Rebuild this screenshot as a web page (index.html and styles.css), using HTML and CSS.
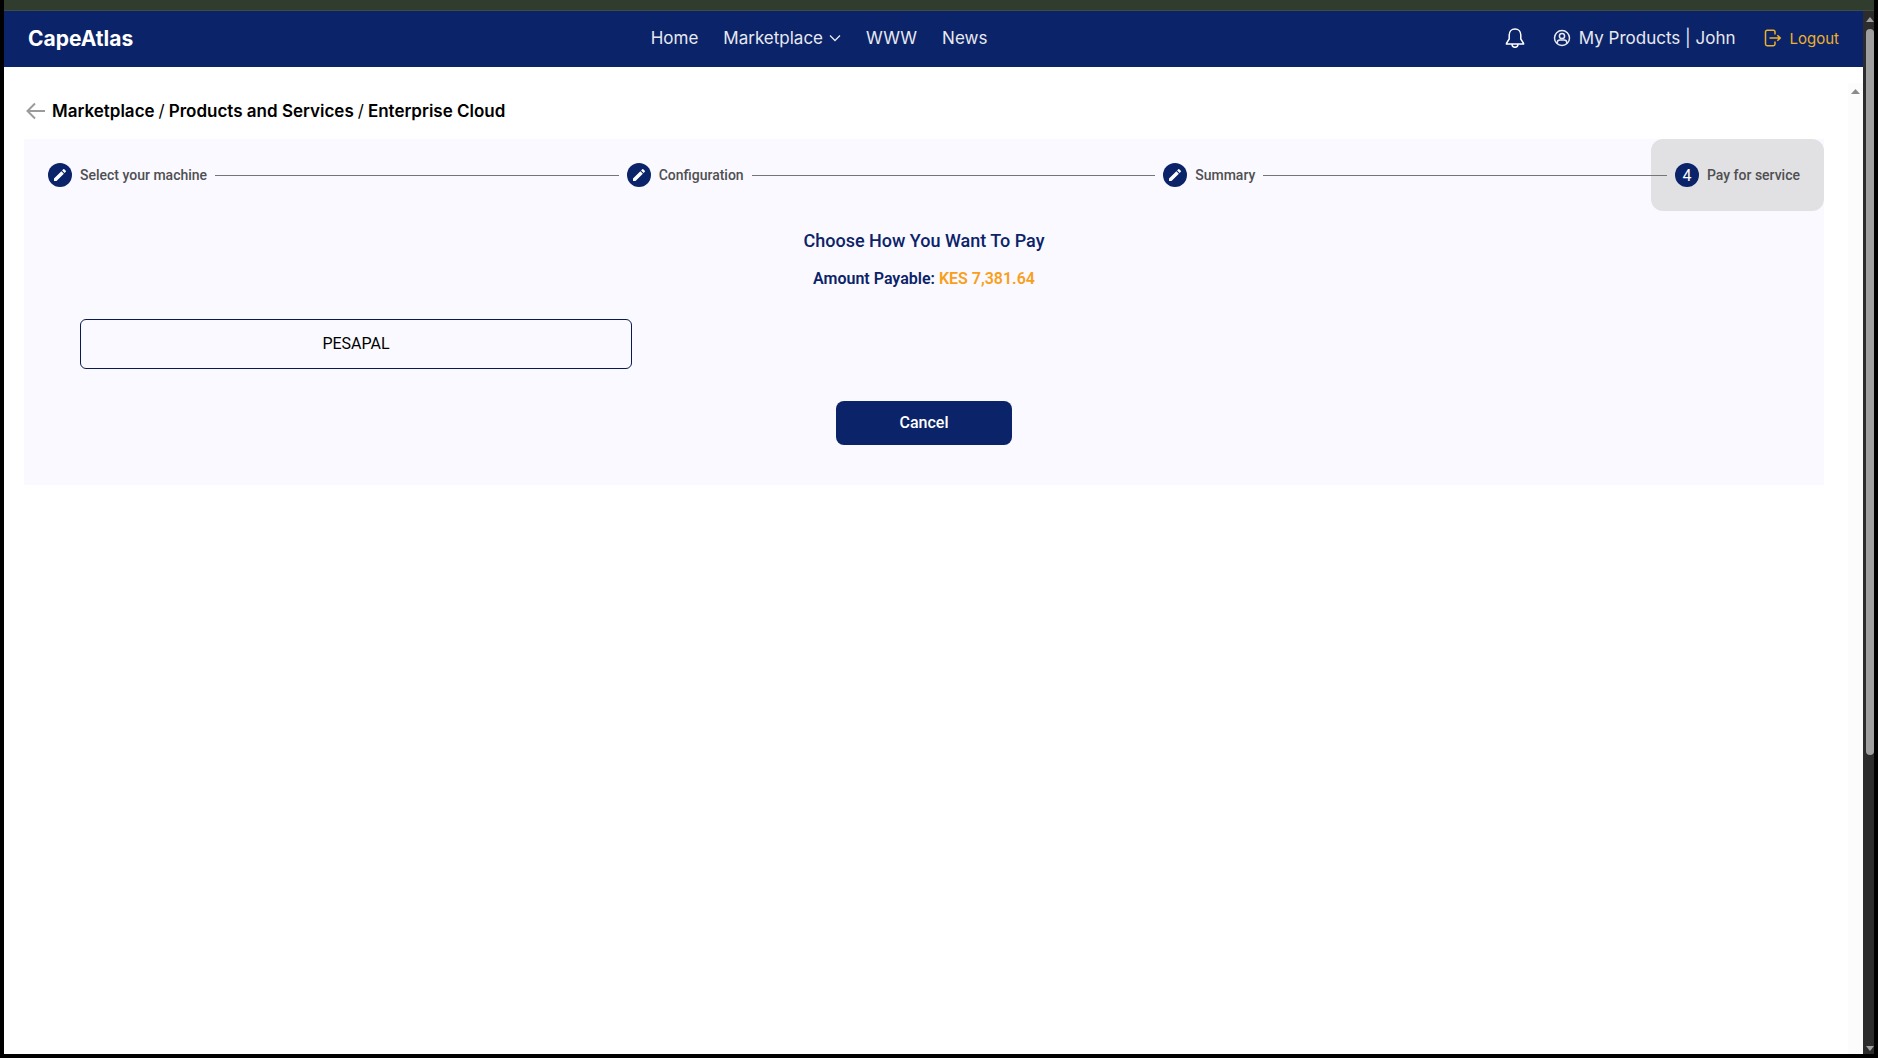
FILE: index.html
```html
<!DOCTYPE html>
<html lang="en">
<head>
  <meta charset="UTF-8">
  <meta name="viewport" content="width=device-width, initial-scale=1.0">
  <title>CapeAtlas - Pay for service</title>
  <link rel="stylesheet" href="styles.css">
</head>
<body>
  <div class="top-strip"></div>
  <div class="window">
    <div class="page">
      <header class="navbar">
        <a class="brand" href="#">CapeAtlas</a>
        <nav class="nav-links">
          <a href="#">Home</a>
          <a href="#">Marketplace
            <svg class="chevron" width="12" height="12" viewBox="0 0 12 12"><path d="M1 3.5l5 5 5-5"/></svg>
          </a>
          <a href="#">WWW</a>
          <a href="#">News</a>
        </nav>
        <div class="account">
          <button class="bell" type="button" aria-label="Notifications">
            <svg width="20" height="20" viewBox="0 0 20 20"><path d="M10 1C6.500 1 4.200 3.700 4.200 7v4L1.500 15.300V16h17v-.7L15.800 11V7C15.800 3.700 13.500 1 10 1zM7 16c0 2 1.300 3.300 3 3.300s3-1.300 3-3.300"/></svg>
          </button>
          <a class="profile" href="#">
            <svg width="18" height="18" viewBox="0 0 18 18"><circle cx="9" cy="9" r="7.500"/><circle cx="9" cy="7" r="2.600"/><path d="M4.200 14.500v-.8c0-1.700 1.100-2.700 2.700-2.700h4.200c1.600 0 2.700 1 2.700 2.700v.8"/></svg>
            My Products | John
          </a>
          <a class="logout" href="#">
            <svg width="18" height="18" viewBox="0 0 18 18"><path d="M11 5.500V3c0-1-.6-1.700-1.600-1.700H3.200c-1 0-1.700.7-1.700 1.700v12c0 1 .7 1.700 1.700 1.700h6.200c1 0 1.600-.7 1.600-1.700v-2.500M5.500 9H16M13.300 6.200L16.200 9l-2.900 2.800"/></svg>
            Logout
          </a>
        </div>
      </header>

      <div class="content">
        <main>
          <div class="breadcrumb">
            <a class="back" href="#" aria-label="Back">
              <svg width="20" height="18" viewBox="0 0 20 18"><path d="M19 9H2M9 1.500L1.500 9 9 16.500"/></svg>
            </a>
            <a href="#">Marketplace</a>
            <span>/</span>
            <a href="#">Products and Services</a>
            <span>/</span>
            <a href="#">Enterprise Cloud</a>
          </div>

          <section class="panel">
            <div class="stepper">
              <button class="step" type="button">
                <span class="step-icon"><svg width="16" height="16" viewBox="0 0 24 24"><path d="M3 17.250V21h3.750L17.810 9.940l-3.750-3.750L3 17.250zM20.710 7.040c.39-.39.39-1.020 0-1.410l-2.340-2.340c-.39-.39-1.020-.39-1.410 0l-1.830 1.830 3.750 3.750 1.830-1.830z"/></svg></span>
                Select your machine
              </button>
              <div class="step-line"></div>
              <button class="step" type="button">
                <span class="step-icon"><svg width="16" height="16" viewBox="0 0 24 24"><path d="M3 17.250V21h3.750L17.810 9.940l-3.750-3.750L3 17.250zM20.710 7.040c.39-.39.39-1.020 0-1.410l-2.340-2.340c-.39-.39-1.020-.39-1.410 0l-1.830 1.830 3.750 3.750 1.830-1.830z"/></svg></span>
                Configuration
              </button>
              <div class="step-line"></div>
              <button class="step" type="button">
                <span class="step-icon"><svg width="16" height="16" viewBox="0 0 24 24"><path d="M3 17.250V21h3.750L17.810 9.940l-3.750-3.750L3 17.250zM20.710 7.040c.39-.39.39-1.020 0-1.410l-2.340-2.340c-.39-.39-1.020-.39-1.410 0l-1.830 1.830 3.750 3.750 1.830-1.830z"/></svg></span>
                Summary
              </button>
              <div class="step-line"></div>
              <button class="step active" type="button" aria-current="step">
                <span class="step-icon">4</span>
                Pay for service
              </button>
            </div>

            <div class="payment">
              <h1>Choose How You Want To Pay</h1>
              <p class="amount">Amount Payable: <span>KES 7,381.64</span></p>
              <div class="methods">
                <button class="method" type="button">PESAPAL</button>
              </div>
              <button class="cancel" type="button">Cancel</button>
            </div>
          </section>
        </main>
        <div class="inner-scroll"><div class="arrow-up"></div></div>
      </div>
    </div>

    <div class="outer-scroll">
      <div class="arrow-up"></div>
      <div class="track"><div class="thumb"></div></div>
      <div class="arrow-down"></div>
    </div>
  </div>
</body>
</html>
```

FILE: styles.css
```css
/* Global Styles */
* {
  box-sizing: border-box;
}

body {
  margin: 0;
  height: 100vh;
  display: flex;
  flex-direction: column;
  font-family: Roboto, sans-serif;
  background-color: #fff;
  border: 4px solid #000;
  border-top: 0;
}

a {
  color: inherit;
  text-decoration: none;
}

button {
  font-family: inherit;
  border: none;
  background: none;
  padding: 0;
  cursor: pointer;
}

svg {
  flex: none;
  fill: none;
  stroke: currentColor;
}

.top-strip {
  flex: none;
  height: 11px;
  background-color: #303c2d;
  border-bottom: 1px solid #414b41;
}

.window {
  flex: 1;
  min-height: 0;
  display: flex;
}

.page {
  flex: 1;
  min-width: 0;
  display: flex;
  flex-direction: column;
}

/* Navbar */
.navbar {
  height: 56px;
  flex: none;
  display: flex;
  align-items: center;
  justify-content: space-between;
  padding: 0 24px 2px;
  background-color: #0b2369;
  color: #fff;
  font-family: Inter, sans-serif;
  font-size: 17px;
}

.brand {
  font-size: 21px;
  font-weight: 700;
}

.nav-links,
.nav-links a,
.account,
.profile,
.logout {
  display: flex;
  align-items: center;
}

.nav-links {
  gap: 25px;
  color: #e7e9f0;
}

.nav-links a {
  gap: 6px;
}

.chevron {
  stroke-width: 1.3;
}

.account {
  gap: 28px;
  color: #e7e9f0;
}

.bell {
  display: flex;
  color: #fff;
}

.bell svg,
.profile svg,
.logout svg {
  stroke-width: 1.5;
}

.profile {
  gap: 8px;
}

.logout {
  gap: 8px;
  font-size: 15px;
  color: #f0b02c;
}

/* Content */
.content {
  flex: 1;
  display: flex;
  padding-top: 16px;
}

main {
  flex: 1;
  padding: 16px 24px 0 20px;
}

.breadcrumb {
  display: flex;
  align-items: center;
  gap: 4px;
  height: 24px;
  margin-bottom: 16px;
  padding-left: 2px;
  font-family: Inter, sans-serif;
  font-size: 17px;
  line-height: 20px;
  font-weight: 600;
  color: #000;
}

.breadcrumb span {
  font-weight: 400;
}

.back {
  display: flex;
  margin-right: 2px;
  color: #9b9b9b;
}

.back svg {
  stroke-width: 2;
}

.panel {
  background-color: #faf9ff;
}

/* Stepper */
.stepper {
  display: flex;
  align-items: center;
}

.step {
  display: flex;
  align-items: center;
  gap: 8px;
  height: 72px;
  padding: 0 24px;
  font-size: 14px;
  font-weight: 500;
  color: #4f4f52;
  white-space: nowrap;
}

.step.active {
  background-color: #e1e1e4;
  border-radius: 12px;
}

.step-icon {
  display: flex;
  align-items: center;
  justify-content: center;
  width: 24px;
  height: 24px;
  border-radius: 50%;
  background-color: #0b2369;
  color: #fff;
  font-size: 16px;
  font-weight: 400;
}

.step-icon svg {
  fill: #fff;
  stroke: none;
}

.step-line {
  flex: 1;
  height: 1px;
  margin: 0 -16px;
  background-color: #757575;
  z-index: 1;
}

/* Payment */
.payment {
  display: flex;
  flex-direction: column;
  align-items: center;
  padding: 16px 56px 40px;
  color: #0b2369;
}

h1 {
  margin: 0 0 12px;
  font-size: 18px;
  line-height: 28px;
  font-weight: 500;
}

.amount {
  margin: 0 0 28px;
  font-size: 16px;
  line-height: 24px;
  font-weight: 600;
}

.amount span {
  color: #f89f1b;
}

.methods {
  display: grid;
  grid-template-columns: repeat(3, 1fr);
  gap: 16px;
  width: 100%;
  margin-bottom: 32px;
}

.method,
.cancel {
  padding-bottom: 2px;
  font-size: 16px;
}

.method {
  height: 50px;
  border: 1px solid #0a1a50;
  border-radius: 6px;
  color: #000;
}

.cancel {
  width: 176px;
  height: 44px;
  border-radius: 8px;
  background-color: #0b2369;
  color: #fff;
  font-weight: 500;
}

/* Scrollbars */
.inner-scroll {
  width: 15px;
  padding: 6px 3px;
  background-color: #fcfcfc;
}

.outer-scroll {
  width: 11px;
  display: flex;
  flex-direction: column;
  padding: 6px 0 3px 3px;
  background-color: #2c2c2c;
}

.track {
  flex: 1;
  margin: 7px 0 8px;
}

.thumb {
  height: 72%;
  border-radius: 4px;
  background-color: #9f9f9f;
}

.arrow-up,
.arrow-down {
  height: 5px;
  background-color: #8b8b8b;
  clip-path: polygon(50% 0, 100% 100%, 0 100%);
}

.arrow-down {
  clip-path: polygon(0 0, 100% 0, 50% 100%);
}

.outer-scroll .arrow-up,
.outer-scroll .arrow-down {
  background-color: #9f9f9f;
}
```
